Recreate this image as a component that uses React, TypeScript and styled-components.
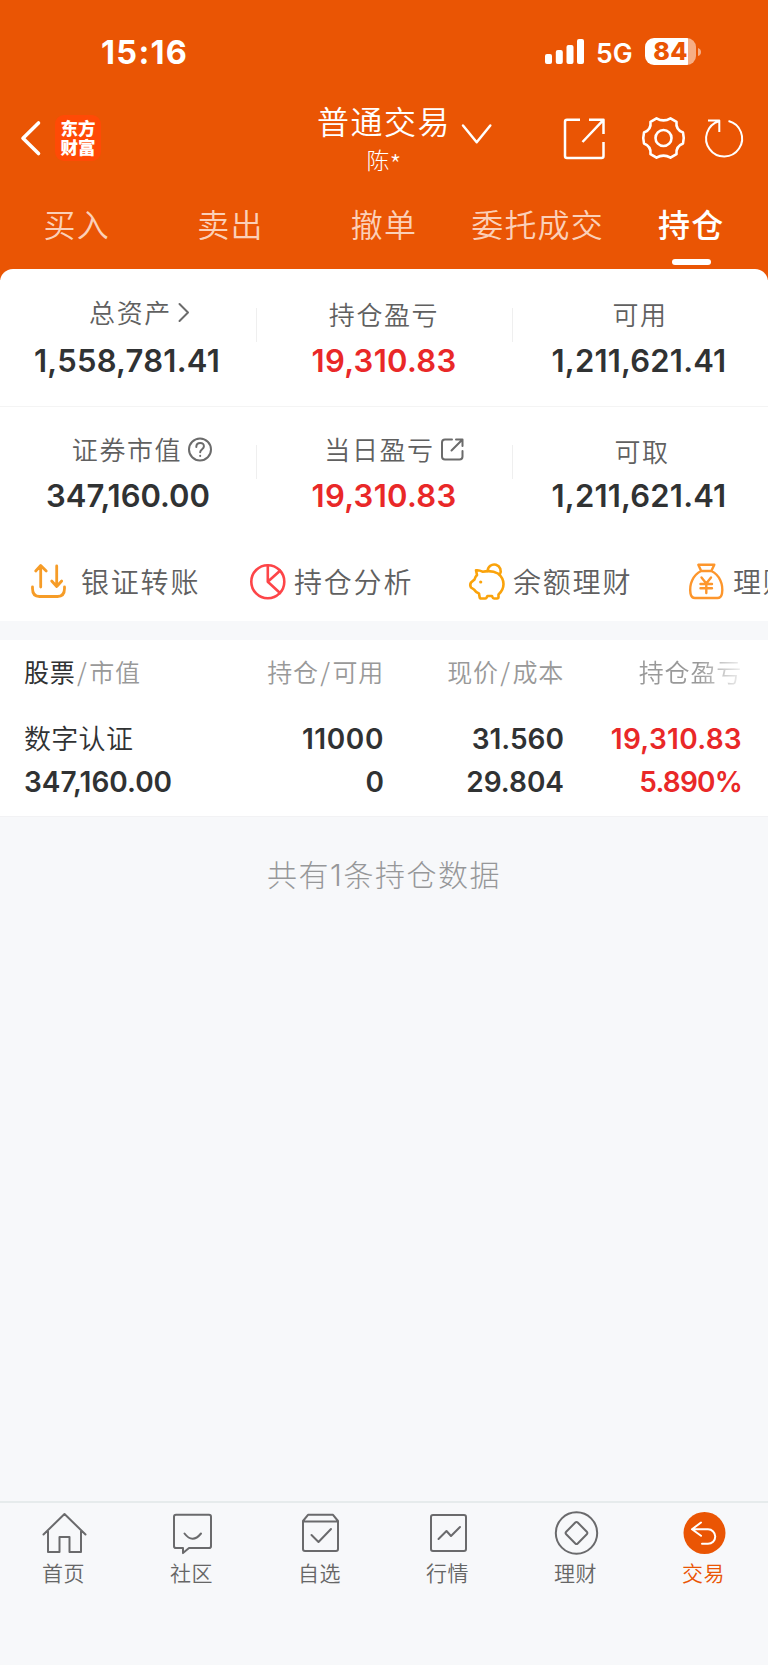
import React from 'react';
import styled, { createGlobalStyle } from 'styled-components';

const ORANGE = '#ea5504';
const RED = '#e92828';
const INK = '#303233';
const GREY = '#6b6b6b';
const CJK = '"Noto Sans CJK SC", sans-serif';
const LATIN = 'Inter, "Noto Sans CJK SC", sans-serif';

const GlobalStyle = createGlobalStyle`
  *, *::before, *::after { box-sizing: border-box; }
  body { margin: 0; background: #f7f8fa; font-family: ${CJK}; }
  svg { display: block; flex: none; overflow: visible; }
`;

const Screen = styled.div`
  width: 768px;
  height: 1665px;
  display: flex;
  flex-direction: column;
  overflow: hidden;
  background: #f7f8fa;
  white-space: nowrap;
`;

const Header = styled.header`
  height: 280px;
  flex: none;
  background: ${ORANGE};
  color: #fff;
`;

const StatusBar = styled.div`
  height: 104px;
  padding: 0 67px 0 101px;
  display: flex;
  justify-content: space-between;
  font-family: ${LATIN};
`;

const Clock = styled.div`
  padding-top: 37px;
  font-size: 32.5px;
  line-height: 32px;
  letter-spacing: 1.3px;
  font-weight: 750;
`;

const StatusRight = styled.div`
  display: flex;
  align-items: center;
  height: 103px;
`;

const Network = styled.span`
  margin: 3px 12px 0 12px;
  width: 37px;
  font-size: 26.5px;
  line-height: 26px;
  font-weight: 600;
`;

const Battery = styled.div`
  width: 51px;
  height: 27px;
  border-radius: 9px;
  background: linear-gradient(90deg, #fff 43px, #f6ae86 43px);
  color: ${ORANGE};
  font-size: 25px;
  line-height: 27px;
  font-weight: 800;
  letter-spacing: 0.4px;
  text-align: center;
`;

const NavBar = styled.div`
  height: 80px;
  display: grid;
  grid-template-columns: 317px 174px 1fr;
`;

const NavLeft = styled.div`
  padding: 11px 0 0 21px;
  display: flex;
  gap: 15px;
`;

const Logo = styled.div`
  width: 46px;
  height: 46px;
  border-radius: 9px;
  background: #ff4a06;
  font-size: 17.5px;
  line-height: 19px;
  font-weight: 800;
  padding-top: 3px;
  text-align: center;
`;

const NavTitle = styled.div`
  display: flex;
  gap: 11px;
`;

const TitleText = styled.div`
  width: 134px;
  font-size: 32px;
  line-height: 36px;
  letter-spacing: 1.5px;
  font-weight: 350;
  margin-top: -2px;
`;

const Account = styled.div`
  font-size: 23px;
  line-height: 36px;
  letter-spacing: 0;
  text-align: center;
  font-weight: 300;
  padding-top: 3px;
  span {
    font-size: 27px;
    line-height: 20px;
    vertical-align: -6px;
  }
`;

const NavActions = styled.div`
  display: flex;
  padding: 13px 0 0 72px;
  svg:nth-child(2) { margin: 0 20px 0 37px; }
`;

const Tabs = styled.nav`
  height: 85px;
  display: grid;
  grid-template-columns: repeat(5, 1fr);
`;

const Tab = styled.div<{ $active?: boolean }>`
  display: flex;
  flex-direction: column;
  align-items: center;
  padding: 21px 0 0 0;
  font-size: 32px;
  line-height: 36px;
  letter-spacing: 1.2px;
  font-weight: ${p => (p.$active ? 500 : 350)};
  color: ${p => (p.$active ? '#fff' : '#fbd0b8')};
`;

const TabMark = styled.i`
  margin-top: 18px;
  width: 39px;
  height: 6px;
  border-radius: 3px;
  background: #fff;
`;

const Summary = styled.section`
  position: relative;
  height: 352px;
  margin-top: -11px;
  flex: none;
  border-radius: 13px 13px 0 0;
  background: #fff;
`;

const StatRow = styled.div<{ $second?: boolean }>`
  height: ${p => (p.$second ? '137px' : '138px')};
  display: grid;
  grid-template-columns: repeat(3, 1fr);
  border-bottom: ${p => (p.$second ? '0' : '1px solid #f4f4f4')};
`;

const Stat = styled.div<{ $second?: boolean }>`
  display: flex;
  flex-direction: column;
  align-items: center;
  background: linear-gradient(#efefef, #efefef) no-repeat left ${p => (p.$second ? 38 : 39)}px / 1px 34px;
  &:first-child { background: none; }
`;

const StatLabel = styled.div<{ $top: number; $indent?: number }>`
  height: 70px;
  padding: ${p => p.$top}px 0 0 ${p => p.$indent ?? 0}px;
  display: flex;
  align-items: flex-start;
  font-size: 26px;
  line-height: 32px;
  letter-spacing: 1.6px;
  font-weight: 350;
  color: #606060;
`;

const StatValue = styled.div<{ $red?: boolean; $second?: boolean; $spacing?: number; $nudge?: number }>`
  margin-top: ${p => (p.$second ? 3 : 6)}px;
  padding-right: ${p => p.$nudge ?? 0}px;
  font-family: ${LATIN};
  font-size: 31px;
  line-height: 32px;
  letter-spacing: ${p => p.$spacing ?? 0}px;
  font-weight: 600;
  color: ${p => (p.$red ? RED : INK)};
`;

const Shortcuts = styled.div`
  height: 77px;
  padding: 17px 0 0 30px;
  display: flex;
  overflow: hidden;
`;

const Shortcut = styled.div<{ $gap: number }>`
  flex: none;
  width: 219px;
  display: flex;
  gap: ${p => p.$gap}px;
  font-size: 28px;
  line-height: 40px;
  letter-spacing: 1.8px;
  font-weight: 350;
  color: #606060;
  svg { margin-top: 1px; }
`;

const Holdings = styled.section`
  margin-top: 19px;
  height: 177px;
  flex: none;
  padding: 0 26px 0 24px;
  background: #fff;
  border-bottom: 1px solid #f2f2f4;
`;

const Row = styled.div<{ $height: number; $top: number }>`
  height: ${p => p.$height}px;
  padding-top: ${p => p.$top}px;
  display: grid;
  grid-template-columns: 160px 200px 180px 178px;
  line-height: 32px;
  text-align: right;
`;

const HeadCell = styled.div<{ $left?: boolean; $fade?: boolean }>`
  text-align: ${p => (p.$left ? 'left' : 'right')};
  font-size: 25px;
  letter-spacing: 0.8px;
  font-weight: 350;
  color: #999;
  b { font-weight: 400; color: ${INK}; }
  span { margin: 0 1.5px; }
  ${p => p.$fade && `
    -webkit-mask-image: linear-gradient(90deg, #000 calc(100% - 44px), transparent calc(100% + 8px));
    mask-image: linear-gradient(90deg, #000 calc(100% - 44px), transparent calc(100% + 8px));
  `}
`;

const StockName = styled.div`
  text-align: left;
  margin-top: -1px;
  font-size: 27px;
  letter-spacing: 0.3px;
  font-weight: 350;
  color: ${INK};
`;

const Num = styled.div<{ $red?: boolean; $left?: boolean; $spacing?: number }>`
  text-align: ${p => (p.$left ? 'left' : 'right')};
  font-family: ${LATIN};
  font-size: 28px;
  letter-spacing: ${p => p.$spacing ?? 0}px;
  font-weight: 600;
  color: ${p => (p.$red ? RED : INK)};
`;

const Footnote = styled.main`
  flex: 1;
  padding-top: 36px;
  text-align: center;
  font-family: ${LATIN};
  font-size: 30px;
  line-height: 44px;
  letter-spacing: 1.5px;
  font-weight: 300;
  color: #969799;
`;

const BottomBar = styled.nav`
  height: 164px;
  flex: none;
  display: grid;
  grid-template-columns: repeat(6, 1fr);
  border-top: 2px solid #e6ebec;
`;

const BottomItem = styled.div<{ $active?: boolean }>`
  display: flex;
  flex-direction: column;
  align-items: center;
  padding-top: 9px;
  font-size: 21px;
  line-height: 30px;
  font-weight: 350;
  color: ${p => (p.$active ? ORANGE : '#666')};
  svg { margin-bottom: 3px; }
`;

const BottomLabel = styled.span`
  padding-right: 1px;
  letter-spacing: 0.6px;
`;

type IconProps = { w: number; h: number; color?: string; sw?: number; children: React.ReactNode };
const Icon = ({ w, h, color = '#fff', sw = 2, children }: IconProps) => (
  <svg width={w} height={h} viewBox={`0 0 ${w} ${h}`} fill="none" stroke={color} strokeWidth={sw} strokeLinecap="round" strokeLinejoin="round">
    {children}
  </svg>
);

const bottomItems = [
  { label: '首页', icon: <path d="M1.5 22.5 22.5 2l21 20.5M6 19v21h11.5V25h10v15H39V19" /> },
  { label: '社区', icon: <><path d="M6 2.8h33q2 0 2 2v29.500q0 1.800-2 1.800H19l-6 5v-5H6q-2 0-2-1.800V4.800q0-2 2-2Z" /><path d="M14.500 21.500q8 10.500 16.500 0" /></> },
  { label: '自选', icon: <><path d="M5 9 10 2.800h25L40 9v28q0 2-2 2H7q-2 0-2-2Z M5 9.600h35" /><path d="m13.500 23 7 7L33 17" /></> },
  { label: '行情', icon: <><rect x="5" y="3" width="35" height="36" rx="2" /><path d="m12.500 27 8-8 4.500 5 9-9" /></> },
  { label: '理财', icon: <><circle cx="22.5" cy="21" r="20.700" /><path d="M21.300 10.500q1.200-1.200 2.400 0l9.100 9.300q1.200 1.200 0 2.400l-9.100 9.300q-1.200 1.200-2.400 0l-9.100-9.300q-1.200-1.200 0-2.400Z" /></> },
  { label: '交易', icon: <><circle cx="22.5" cy="21" r="21" fill={ORANGE} stroke="none" /><path stroke="#fff" d="m19 10.500-9 6.800 9 6.500M10.500 17.300h15.500a7 7 0 0 1 0 14.500H20" /></> },
];

export default function App() {
  return (
    <Screen>
      <GlobalStyle />
      <Header>
        <StatusBar>
          <Clock>15:16</Clock>
          <StatusRight>
            <svg width="39" height="25" viewBox="0 0 39 25" fill="#fff">
              <rect x="0" y="15" width="7" height="10" rx="2" />
              <rect x="10.800" y="11" width="7" height="14" rx="2" />
              <rect x="21.500" y="6" width="7" height="19" rx="2" />
              <rect x="32" y="0" width="7" height="25" rx="2" />
            </svg>
            <Network>5G</Network>
            <Battery>84</Battery>
            <svg width="5" height="10" viewBox="0 0 5 10"><path d="M2 1q3 1 3 4T2 9Z" fill="#f6ae86" /></svg>
          </StatusRight>
        </StatusBar>
        <NavBar>
          <NavLeft>
            <Icon w={19} h={46} sw={3.6}><path d="M17.500 8 2 23.200 17.500 38.500" /></Icon>
            <Logo>东方<br />财富</Logo>
          </NavLeft>
          <NavTitle>
            <TitleText>
              普通交易
              <Account>陈<span>*</span></Account>
            </TitleText>
            <Icon w={29} h={40} sw={2.500}><path d="m1 21.500 13.700 16.700L28.300 21.500" /></Icon>
          </NavTitle>
          <NavActions>
            <Icon w={42} h={44} sw={2.500}>
              <path d="M17 2.800H4q-2 0-2 2V39q0 2 2 2h34.500q2 0 2-2V25M26 2.800h14.500V17M40 3.300 19.500 25" strokeLinecap="butt" />
            </Icon>
            <Icon w={43} h={42} sw={2.600}>
              <path d="M14.500 1.300Q21.500 5.500 28.500 1.300L34.500 4.800Q33.500 12.500 41 15.500 42.500 21 41 26.500 33.500 29.500 34.500 37.200L28.500 40.700Q21.500 36.500 14.500 40.700L8.500 37.200Q9.500 29.500 2 26.500.5 21 2 15.500 9.500 12.500 8.500 4.800Z" />
              <circle cx="21.500" cy="21" r="8" />
            </Icon>
            <Icon w={38} h={44} sw={2}>
              <path d="M23.500 4A18 18 0 1 1 14 4.200M3 3.500H14.300V15" strokeLinecap="butt" />
            </Icon>
          </NavActions>
        </NavBar>
        <Tabs>
          <Tab>买入</Tab>
          <Tab>卖出</Tab>
          <Tab>撤单</Tab>
          <Tab>委托成交</Tab>
          <Tab $active>持仓<TabMark /></Tab>
        </Tabs>
      </Header>

      <Summary>
        <StatRow>
          <Stat>
            <StatLabel $top={27} $indent={27}>总资产<Icon w={22} h={32} color={GREY}><path d="m7.500 8 8.500 8.500L7.500 25" /></Icon></StatLabel>
            <StatValue $spacing={0.25} $nudge={2}>1,558,781.41</StatValue>
          </Stat>
          <Stat>
            <StatLabel $top={29}>持仓盈亏</StatLabel>
            <StatValue $red $spacing={0.3}>19,310.83</StatValue>
          </Stat>
          <Stat>
            <StatLabel $top={29}>可用</StatLabel>
            <StatValue $spacing={0.2} $nudge={2}>1,211,621.41</StatValue>
          </Stat>
        </StatRow>
        <StatRow $second>
          <Stat $second>
            <StatLabel $top={26} $indent={29}>
              证券市值
              <Icon w={31} h={32} color={GREY}>
                <circle cx="18" cy="16.500" r="11" />
                <path d="M14.300 14q0-4 3.900-4t3.700 3.600c0 2.600-3.700 2.800-3.700 5.700M18.200 22.800v.2" />
              </Icon>
            </StatLabel>
            <StatValue $second>347,160.00</StatValue>
          </Stat>
          <Stat $second>
            <StatLabel $top={26} $indent={21}>
              当日盈亏
              <Icon w={30} h={32} color={GREY}>
                <path d="M17 6.500H10q-3 0-3 3v14q0 3 3 3h14.500q3 0 3-3v-5.500M21 6.500h6.500V13M27 7l-10.500 10.500" />
              </Icon>
            </StatLabel>
            <StatValue $red $second $spacing={0.3}>19,310.83</StatValue>
          </Stat>
          <Stat $second>
            <StatLabel $top={28} $indent={4}>可取</StatLabel>
            <StatValue $second $spacing={0.2} $nudge={2}>1,211,621.41</StatValue>
          </Stat>
        </StatRow>
        <Shortcuts>
          <Shortcut $gap={14}>
            <Icon w={37} h={40} color="#f69c27" sw={2.800}>
              <path d="M2.500 25v1.500q0 8 7 8h18q7 0 7-8V25M10.700 25V4M5.700 9l5-5.500 5.500 5.500M26.700 4V24M21.700 19l5 5.500 5-5.500" />
            </Icon>
            银证转账
          </Shortcut>
          <Shortcut $gap={8}>
            <Icon w={37} h={40} color="#fd4548" sw={2.600}>
              <circle cx="18.800" cy="19.700" r="16.500" /><path d="M18.800 3.300V19.800L31 31M18.800 19.800 31 8.700" />
            </Icon>
            持仓分析
          </Shortcut>
          <Shortcut $gap={8}>
            <Icon w={37} h={40} color="#faa30b" sw={2.600}>
              <path d="M14.500 9.700Q24 8 30 11.500 35.500 16 35.500 22 35.500 28 30.500 32.500V35q0 1.500-1.500 1.500h-3q-1.200 0-1.600-1.500l-.4-1h-4.500l-.6 1q-.5 1.500-1.600 1.500h-4q-1.500 0-1.700-1.500L11 31.500Q8 30.500 6 27.500L3 25.500q-1.500-2.500 0-5L6.500 17.500Q7 15 9 13L8 8.300q3-.5 6.500 1.400Z" />
              <path d="M19.700 9a6.500 6.500 0 1 1 12 3.500" />
              <circle cx="12.700" cy="20" r="1.600" fill="#faa30b" stroke="none" />
            </Icon>
            余额理财
          </Shortcut>
          <Shortcut $gap={9}>
            <Icon w={37} h={40} color="#fd962c" sw={2.400}>
              <path d="M14.200 9 11.300 2.800h16L24.300 9ZM14.200 9C6 13 2 22 3.500 31.500q.8 4.500 4.500 4.500h22.500q3.700 0 4.500-4.500C36.500 22 32.500 13 24.300 9M14.500 15.500l4.800 6 4.700-6M19.300 21.500v9.500M13.500 22h11.500M13.500 26.300h11.500" />
            </Icon>
            理财
          </Shortcut>
        </Shortcuts>
      </Summary>

      <Holdings>
        <Row $height={82} $top={15}>
          <HeadCell $left><b>股票</b><span>/</span>市值</HeadCell>
          <HeadCell>持仓<span>/</span>可用</HeadCell>
          <HeadCell>现价<span>/</span>成本</HeadCell>
          <HeadCell $fade>持仓盈亏</HeadCell>
        </Row>
        <Row $height={43} $top={1}>
          <StockName>数字认证</StockName>
          <Num $spacing={0.6}>11000</Num>
          <Num>31.560</Num>
          <Num $red $spacing={0.3}>19,310.83</Num>
        </Row>
        <Row $height={43} $top={1}>
          <Num $left>347,160.00</Num>
          <Num>0</Num>
          <Num>29.804</Num>
          <Num $red $spacing={-0.8}>5.890%</Num>
        </Row>
      </Holdings>

      <Footnote>共有1条持仓数据</Footnote>

      <BottomBar>
        {bottomItems.map((item, i) => (
          <BottomItem key={item.label} $active={i === 5}>
            <Icon w={45} h={42} color="#6a6a6c" sw={2}>{item.icon}</Icon>
            <BottomLabel>{item.label}</BottomLabel>
          </BottomItem>
        ))}
      </BottomBar>
    </Screen>
  );
}
